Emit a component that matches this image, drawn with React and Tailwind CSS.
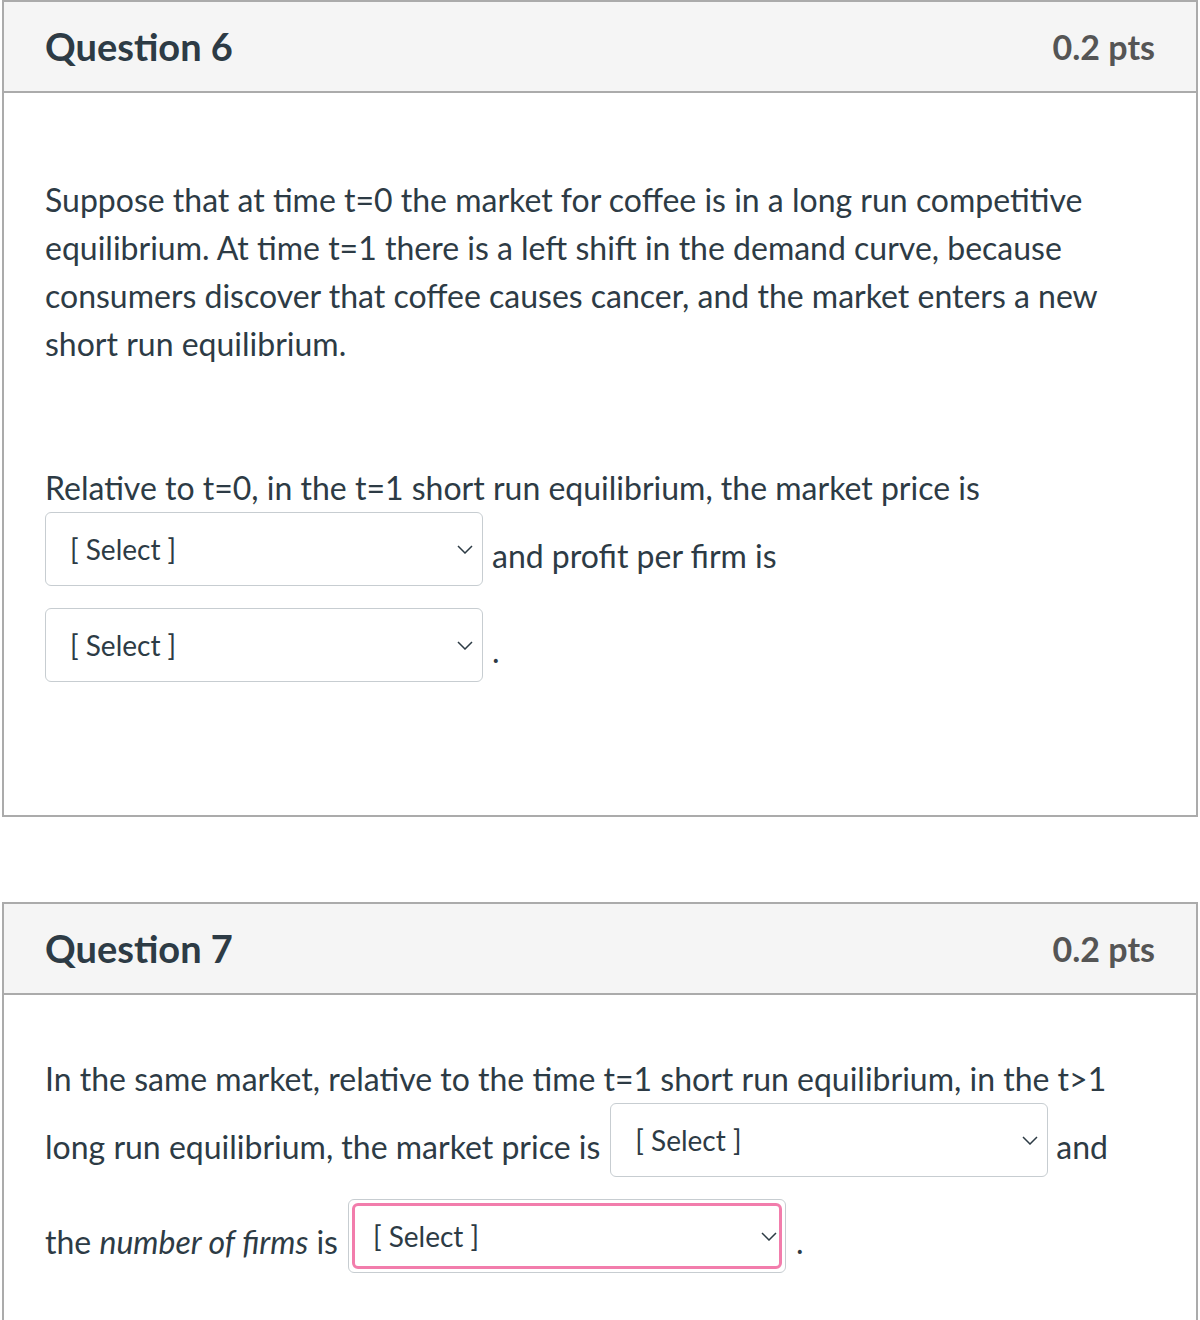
function Chevron() {
  return (
    <svg width="16" height="9" viewBox="0 0 16 9" className="shrink-0">
      <polyline points="1,1 8,8 15,1" fill="none" stroke="#2d3b45" strokeWidth="1.5" />
    </svg>
  );
}

function Select({ focused }) {
  if (focused) {
    return (
      <div className="w-[438px] h-[74px] rounded-[6px] border border-[#c7cdd1] p-[3px] shrink-0 bg-white">
        <div className="h-full rounded-[6px] border-[3px] border-[#f27dac] flex items-center justify-between pl-[18px] pr-[2px]">
          <span className="text-[28px] text-[#2d3b45] -mt-[1px]">[ Select ]</span>
          <Chevron />
        </div>
      </div>
    );
  }
  return (
    <div className="w-[438px] h-[74px] rounded-[6px] border border-[#c7cdd1] flex items-center justify-between pl-[24px] pr-[9px] shrink-0 bg-white">
      <span className="text-[28px] text-[#2d3b45]">[ Select ]</span>
      <Chevron />
    </div>
  );
}

function Header({ title }) {
  return (
    <div className="h-[91px] bg-[#f5f5f5] border-b-2 border-[#ababab] flex items-center justify-between pl-[41px] pr-[41px]">
      <h2 className="text-[38px] font-bold text-[#2d3b45]">{title}</h2>
      <span className="text-[34px] font-bold text-[#555555]">0.2 pts</span>
    </div>
  );
}

export default function App() {
  return (
    <div className="min-h-[1320px] bg-white pl-[2px] pr-[2px] overflow-hidden" style={{ fontFamily: "Lato, 'Noto Sans', sans-serif" }}>

      {/* QUESTION 6 */}
      <div className="border-2 border-[#ababab]">
        <Header title="Question 6" />
        <div className="pl-[41px] pr-[40px] pt-[83px] pb-[133px] text-[32px] leading-[48px] text-[#2d3b45]">
          <p>
            Suppose that at time t=0 the market for coffee is in a long run competitive equilibrium. At time t=1 there is a left shift in the demand curve, because consumers discover that coffee causes cancer, and the market enters a new short run equilibrium.
          </p>
          <p className="mt-[96px]">
            Relative to t=0, in the t=1 short run equilibrium, the market price is
          </p>
          <div className="flex items-start gap-[9px]">
            <Select />
            <span className="pt-[20px]">and profit per firm is</span>
          </div>
          <div className="flex items-start gap-[9px] mt-[22px]">
            <Select />
            <span className="pt-[19px]">.</span>
          </div>
        </div>
      </div>

      {/* QUESTION 7 */}
      <div className="border-2 border-[#ababab] mt-[85px] h-[460px]">
        <Header title="Question 7" />
        <div className="pl-[41px] pr-[40px] pt-[60px] text-[32px] leading-[48px] text-[#2d3b45]">
          <p>In the same market, relative to the time t=1 short run equilibrium, in the t&gt;1</p>
          <div className="flex items-start gap-[10px]">
            <span className="pt-[20px]">long run equilibrium, the market price is</span>
            <Select />
            <span className="pt-[20px] -ml-[2px]">and</span>
          </div>
          <div className="flex items-start gap-[10px] mt-[22px]">
            <span className="pt-[19px]">the <em>number of firms</em> is</span>
            <Select focused />
            <span className="pt-[19px]">.</span>
          </div>
        </div>
      </div>

    </div>
  );
}
